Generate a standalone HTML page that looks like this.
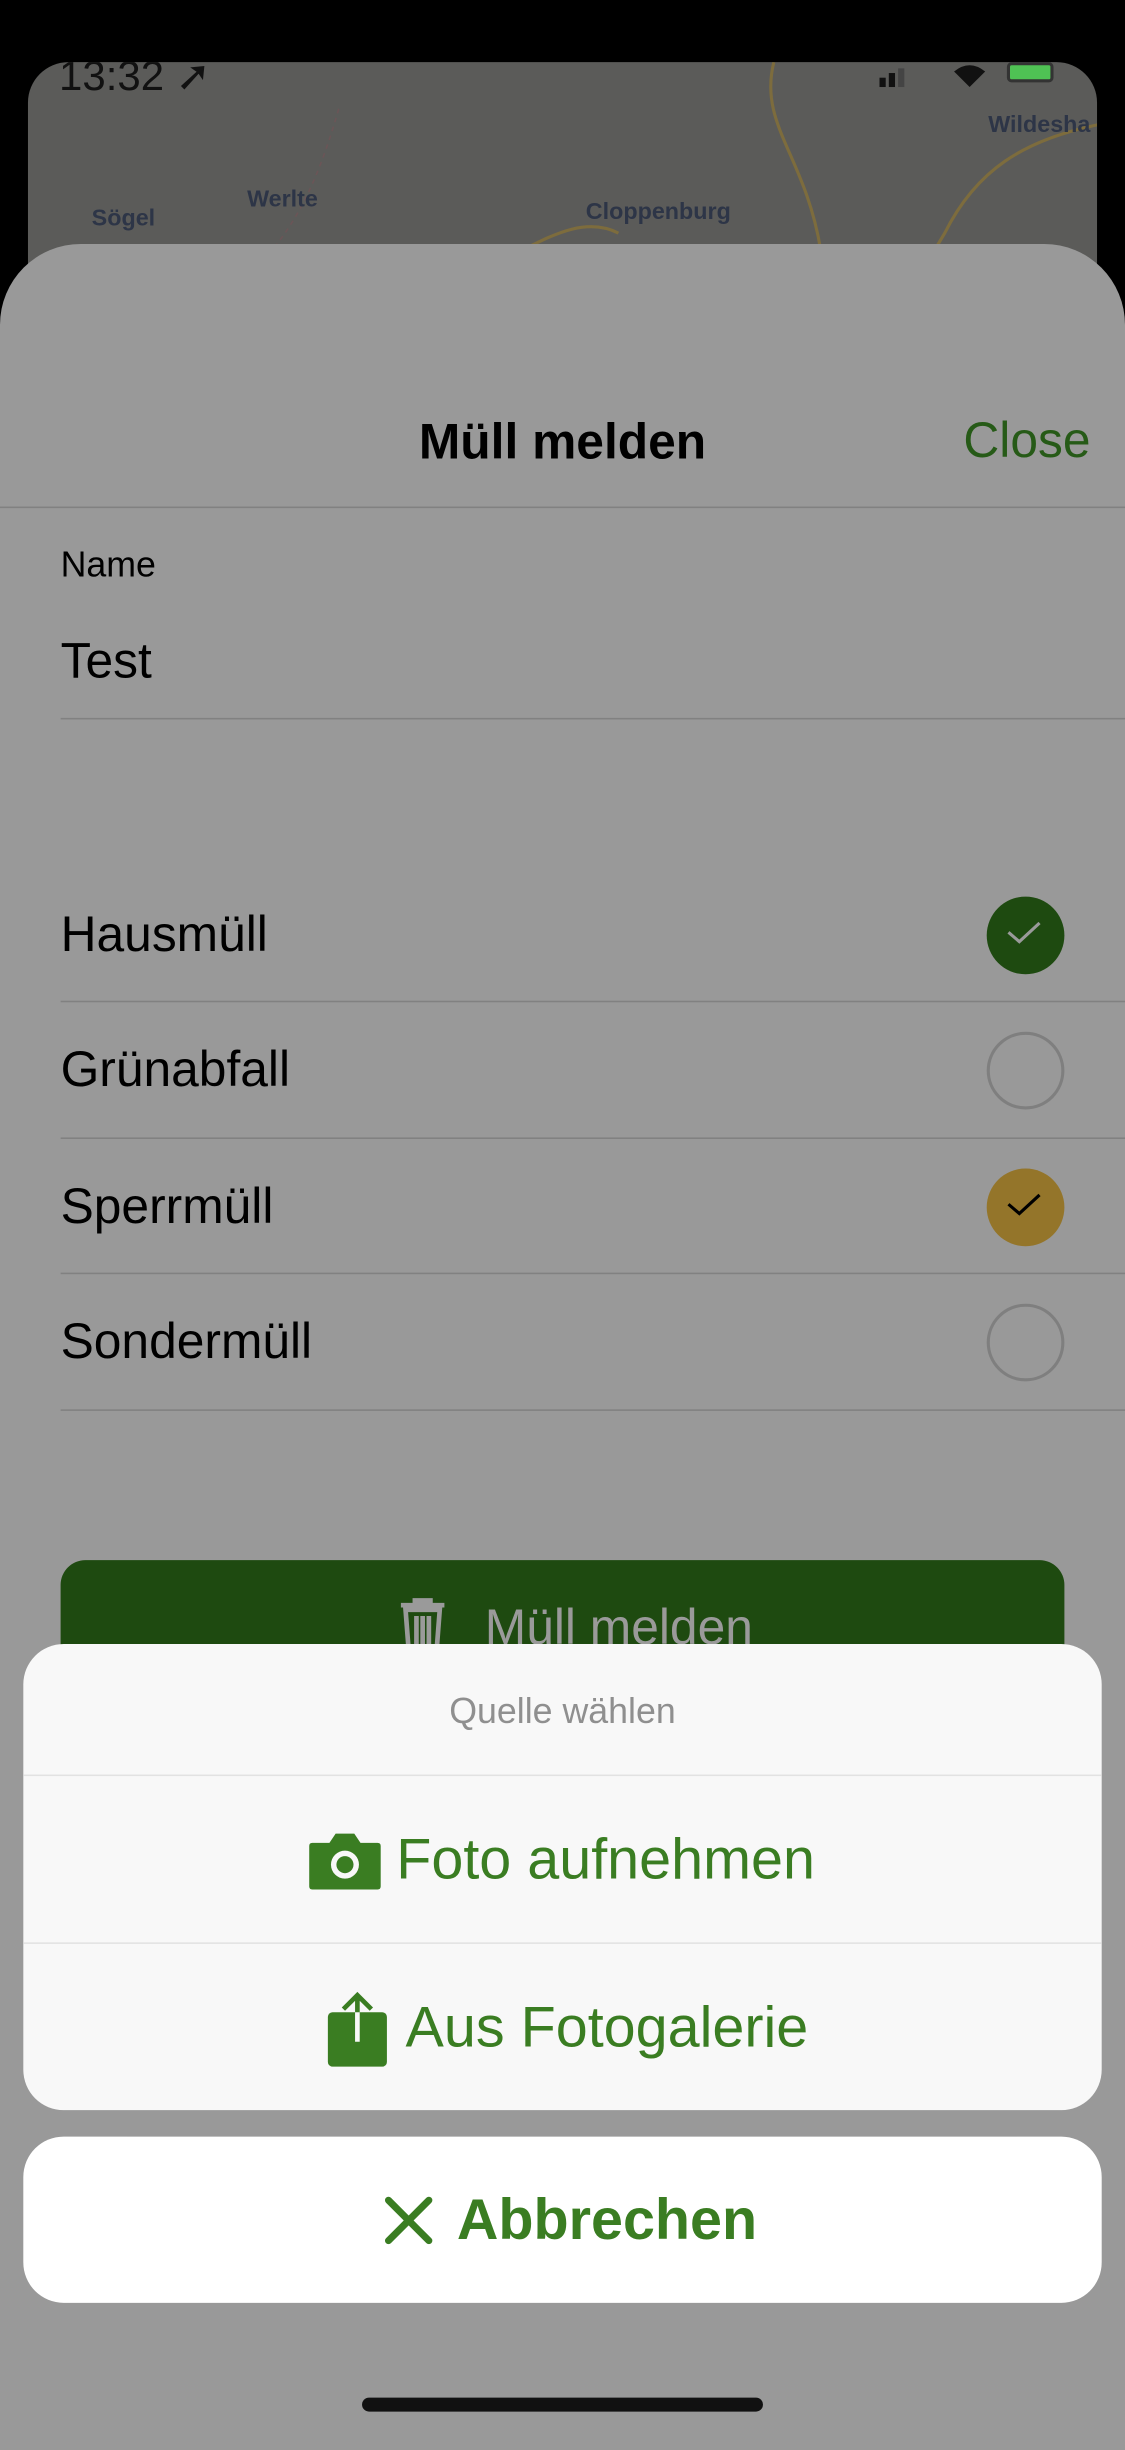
<!DOCTYPE html>
<html><head><meta charset="utf-8"><style>
*{margin:0;padding:0;box-sizing:border-box}
html,body{width:1125px;height:2436px;overflow:hidden;background:#000;font-family:"Liberation Sans",sans-serif}
#w{position:absolute;left:0;top:0;width:724px;height:1568px;transform:scale(1.55387);transform-origin:0 0;background:#000}
.a{position:absolute}
.map{left:18px;top:40px;width:688px;height:160px;border-radius:26px;background:#5b5b59;overflow:hidden}
.ml{position:absolute;color:#2d3547;font-size:15px;font-weight:bold}
.sheet{left:0;top:157px;width:724px;height:1420px;border-radius:52px 52px 0 0;background:#999}
.t{position:absolute;white-space:nowrap;line-height:1}
.sep{position:absolute;height:1px;background:#818181}
.circ{position:absolute;left:635px;width:50px;height:50px;border-radius:50%}
.empty{border:2px solid #7f7f7f}
</style></head><body><div id="w">
<div class="a map">
 <svg width="688" height="160" style="position:absolute;left:0;top:0">
  <path d="M480 0 C470 40 500 60 510 120 L500 160" stroke="#7d6c3d" stroke-width="2" fill="none"/>
  <path d="M690 40 C640 50 610 70 590 110 L560 160" stroke="#7d6c3d" stroke-width="2" fill="none"/>
  <path d="M320 120 C340 110 360 100 380 110" stroke="#7d6c3d" stroke-width="2" fill="none"/>
  <path d="M200 30 C180 100 160 120 130 150" stroke="#6b5557" stroke-width="1" stroke-dasharray="3 3" fill="none"/>
 </svg>
 <div class="ml" style="left:41px;top:92px">Sögel</div>
 <div class="ml" style="left:141px;top:80px">Werlte</div>
 <div class="ml" style="left:359px;top:88px">Cloppenburg</div>
 <div class="ml" style="left:618px;top:32px">Wildesha</div>
 <div class="t" style="left:20px;top:-4px;font-size:27px;color:#111">13:32 ➚</div>
 <div class="a" style="left:548px;top:4px;width:30px;height:12px">
  <div class="a" style="left:0;top:6px;width:4px;height:6px;background:#111"></div>
  <div class="a" style="left:6px;top:3px;width:4px;height:9px;background:#111"></div>
  <div class="a" style="left:12px;top:0;width:4px;height:12px;background:#444"></div>
 </div>
 <svg class="a" style="left:594px;top:0" width="24" height="16" viewBox="0 0 24 16"><path d="M12 16 L2 6 Q12 -2 22 6 Z" fill="#111"/></svg>
 <div class="a" style="left:630px;top:0;width:30px;height:13px;border-radius:3px;border:2px solid #333;background:#4fc254"></div>
</div>
<div class="a sheet">
 <div class="t" style="left:0;width:724px;text-align:center;top:111px;font-size:32px;font-weight:bold;color:#000">Müll melden</div>
 <div class="t" style="left:620px;top:110px;font-size:32px;color:#265a17">Close</div>
 <div class="sep" style="left:0;top:169px;width:724px"></div>
 <div class="t" style="left:39px;top:195px;font-size:23px;color:#000">Name</div>
 <div class="t" style="left:39px;top:252px;font-size:32px;color:#000">Test</div>
 <div class="sep" style="left:39px;top:305px;width:685px"></div>
 <div class="t" style="left:39px;top:428px;font-size:32px;color:#000">Hausmüll</div>
 <div class="sep" style="left:39px;top:487px;width:685px"></div>
 <div class="t" style="left:39px;top:515px;font-size:32px;color:#000">Grünabfall</div>
 <div class="sep" style="left:39px;top:575px;width:685px"></div>
 <div class="t" style="left:39px;top:603px;font-size:32px;color:#000">Sperrmüll</div>
 <div class="sep" style="left:39px;top:662px;width:685px"></div>
 <div class="t" style="left:39px;top:690px;font-size:32px;color:#000">Sondermüll</div>
 <div class="sep" style="left:39px;top:750px;width:685px"></div>
 <div class="circ" style="top:420px;background:#1e4a10"><svg width="50" height="50"><path d="M14 23 L21 29 L34 17" stroke="#9a9a9a" stroke-width="2" fill="none"/></svg></div>
 <div class="circ empty" style="top:507px"></div>
 <div class="circ" style="top:595px;background:#94752a"><svg width="50" height="50"><path d="M14 23 L21 29 L34 17" stroke="#000" stroke-width="2" fill="none"/></svg></div>
 <div class="circ empty" style="top:682px"></div>
 <div class="a" style="left:39px;top:847px;width:646px;height:80px;border-radius:16px;background:#1e4a10">
  <svg class="a" style="left:216px;top:24px" width="34" height="34" viewBox="0 0 34 34"><path d="M3 5 H31 M12 5 V2 H22 V5 M6 8 L8 34 H26 L28 8 Z M13 12 V30 M17 12 V30 M21 12 V30" stroke="#9a9a9a" stroke-width="3" fill="none"/></svg>
  <div class="t" style="left:273px;top:27px;font-size:32px;color:#9a9a9a">Müll melden</div>
 </div>
</div>
<div class="a" style="left:15px;top:1058px;width:694px;height:300px;border-radius:26px;background:#f8f8f8">
 <div class="t" style="left:0;width:694px;text-align:center;top:32px;font-size:23px;color:#8f8f8f">Quelle wählen</div>
 <div class="sep" style="left:0;top:84px;width:694px;background:#e2e2e2"></div>
 <div class="a" style="left:183px;top:120px">
  <svg width="48" height="40" viewBox="0 0 48 40"><path d="M3 8 H14 L18 2 H30 L34 8 H45 Q47 8 47 10 V36 Q47 38 45 38 H3 Q1 38 1 36 V10 Q1 8 3 8 Z" fill="#3a7d22"/><circle cx="24" cy="22" r="9" fill="#f8f8f8"/><circle cx="24" cy="22" r="5.5" fill="#3a7d22"/></svg>
 </div>
 <div class="t" style="left:240px;top:120px;font-size:37px;color:#3a7d22">Foto aufnehmen</div>
 <div class="sep" style="left:0;top:192px;width:694px;background:#e2e2e2"></div>
 <div class="a" style="left:195px;top:223px">
  <svg width="40" height="50" viewBox="0 0 40 50"><rect x="1" y="14" width="38" height="35" rx="3" fill="#3a7d22"/><path d="M20 33 V3 M11 12 L20 3 L29 12" stroke="#3a7d22" stroke-width="3" fill="none"/><path d="M20 33 V14" stroke="#f8f8f8" stroke-width="3"/></svg>
 </div>
 <div class="t" style="left:246px;top:228px;font-size:37px;color:#3a7d22">Aus Fotogalerie</div>
</div>
<div class="a" style="left:15px;top:1375px;width:694px;height:107px;border-radius:26px;background:#fff">
 <svg class="a" style="left:232px;top:38px" width="32" height="32"><path d="M3 3 L29 29 M29 3 L3 29" stroke="#3a7d22" stroke-width="4.5" stroke-linecap="round"/></svg>
 <div class="t" style="left:279px;top:35px;font-size:37px;font-weight:bold;color:#3a7d22">Abbrechen</div>
</div>
<div class="a" style="left:233px;top:1543px;width:258px;height:9px;border-radius:5px;background:#111"></div>
</div></body></html>
